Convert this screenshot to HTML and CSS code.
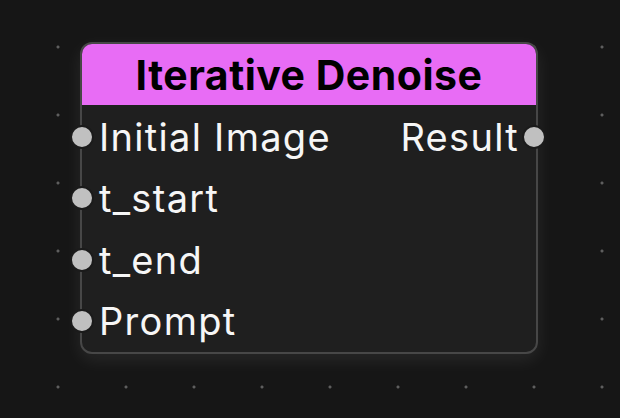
FILE: index.html
```html
<!DOCTYPE html>
<html>
<head>
<meta charset="utf-8">
<link rel="stylesheet" href="styles.css">
</head>
<body>
<div class="canvas">
  <div class="node">
    <div class="node-header">Iterative Denoise</div>
    <div class="node-body">
      <div class="row">
        <div class="port port-in"><span class="socket"></span><span class="label">Initial Image</span></div>
        <div class="port port-out"><span class="label">Result</span><span class="socket"></span></div>
      </div>
      <div class="row">
        <div class="port port-in"><span class="socket"></span><span class="label">t_start</span></div>
      </div>
      <div class="row">
        <div class="port port-in"><span class="socket"></span><span class="label">t_end</span></div>
      </div>
      <div class="row">
        <div class="port port-in"><span class="socket"></span><span class="label">Prompt</span></div>
      </div>
    </div>
  </div>
</div>
</body>
</html>
```
FILE: styles.css
```css
html, body {
  margin: 0;
  padding: 0;
}
body {
  width: 620px;
  height: 418px;
  overflow: hidden;
  background-color: #161616;
  background-image: radial-gradient(circle at 34px 34px, #5e5e5e 0, #5e5e5e 1.1px, rgba(94,94,94,0) 1.9px);
  background-size: 68px 68px;
  background-position: 24px 13px;
  font-family: Inter, "Noto Sans", "DejaVu Sans", sans-serif;
}
.canvas {
  padding: 42px 0 0 80px;
}
.node {
  width: 454px;
  border: 2px solid #474747;
  border-radius: 12px;
  background: #1f1f1f;
  box-shadow: 0 6px 18px rgba(255, 255, 255, 0.08);
}
.node-header {
  height: 61px;
  background: #e86cf5;
  border-radius: 10px 10px 0 0;
  color: #000;
  font-weight: 700;
  font-size: 41px;
  letter-spacing: 0.5px;
  display: flex;
  align-items: center;
  justify-content: center;
}
.node-body {
  display: flex;
  flex-direction: column;
  padding-top: 1px;
}
.row {
  height: 61.5px;
  display: flex;
  align-items: center;
  justify-content: space-between;
}
.port {
  display: flex;
  align-items: center;
}
.port-in {
  margin-left: -12px;
  gap: 5px;
}
.port-out {
  margin-right: -10px;
  gap: 3px;
}
.socket {
  width: 20px;
  height: 20px;
  border-radius: 50%;
  background: #c0c0c0;
  border: 2px solid #1b1b1b;
  flex: none;
}
.label {
  color: #f6f6f6;
  font-size: 38px;
  letter-spacing: 1.3px;
  line-height: 1;
}
```
